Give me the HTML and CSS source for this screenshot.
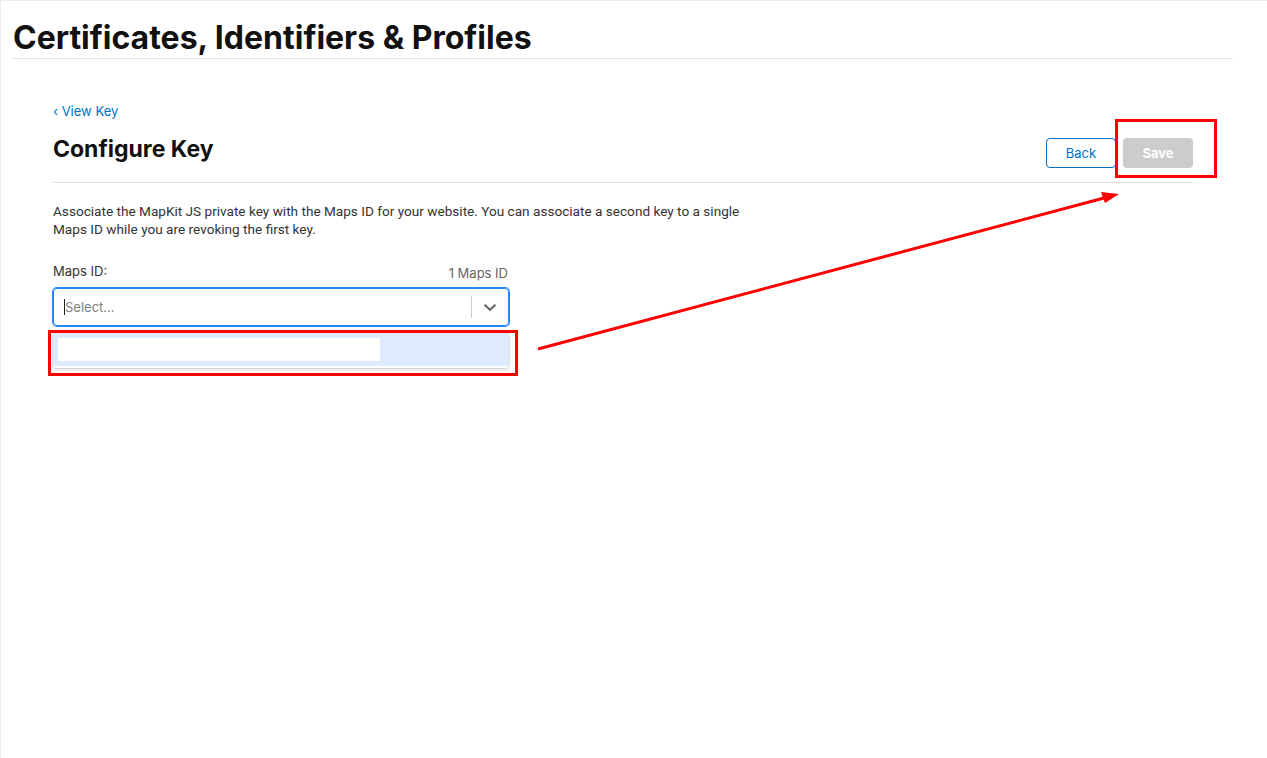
FILE: index.html
```html
<!DOCTYPE html>
<html lang="en">
<head>
  <meta charset="UTF-8">
  <title>Certificates, Identifiers &amp; Profiles - Configure Key</title>
  <link rel="stylesheet" href="styles.css">
</head>
<body>

  <!-- Page header -->
  <div class="page-header">
    <h1>Certificates, Identifiers &amp; Profiles</h1>
  </div>

  <!-- Main content -->
  <div class="content">
    <a class="crumb" href="#">&lsaquo; View Key</a>

    <div class="title-row">
      <h2>Configure Key</h2>
      <div class="actions">
        <button class="btn btn-back">Back</button>
        <button class="btn btn-save" disabled>Save</button>
      </div>
    </div>

    <p class="intro">
      Associate the MapKit JS private key with the Maps ID for your website. You can associate a second key to a single<br>
      Maps ID while you are revoking the first key.
    </p>

    <!-- Maps ID select -->
    <div class="field">
      <div class="field-label">
        <span>Maps ID:</span>
        <span class="count">1 Maps ID</span>
      </div>
      <div class="select">
        <div class="select-value"><span class="caret"></span>Select...</div>
        <div class="select-sep"></div>
        <div class="select-arrow">
          <svg width="20" height="20" viewBox="0 0 20 20"><path d="M4.5 7.7 10 12.8l5.5-5.1" fill="none" stroke="#666" stroke-width="2.2"/></svg>
        </div>
      </div>
      <div class="menu">
        <div class="menu-option"><div class="redacted"></div></div>
      </div>
    </div>
  </div>

  <!-- Annotations -->
  <svg class="annotations" width="1267" height="758" viewBox="0 0 1267 758">
    <rect x="1116.5" y="120.5" width="99" height="56" fill="none" stroke="#f00" stroke-width="3"/>
    <rect x="49.5" y="331.5" width="467" height="43" fill="none" stroke="#f00" stroke-width="3"/>
    <line x1="538" y1="349" x2="1104" y2="198" stroke="#f00" stroke-width="3"/>
    <polygon points="1119,194 1101,192 1105,203" fill="#f00"/>
  </svg>

</body>
</html>
```

FILE: styles.css
```css
/* Reset */
* {
  margin: 0;
  padding: 0;
  box-sizing: border-box;
}

body {
  background: #ffffff;
  font-family: 'Inter', 'Liberation Sans', sans-serif;
  color: #111;
  border-top: 1px solid #ececec;
  border-left: 1px solid #ececec;
  min-height: 100vh;
  position: relative;
}

/* Header */
.page-header {
  margin: 0 34px 0 12px;
  padding-top: 17px;
  height: 58px;
  border-bottom: 1px solid #e3e3e3;
}

.page-header h1 {
  font-size: 32px;
  font-weight: 700;
  line-height: 40px;
}

/* Content */
.content {
  margin: 0 74px 0 52px;
  padding-top: 44px;
}

.crumb {
  display: block;
  color: #0070c9;
  font-size: 13px;
  line-height: 16px;
  text-decoration: none;
}

.title-row {
  display: flex;
  justify-content: space-between;
  align-items: flex-end;
  padding: 15px 0 14px;
  border-bottom: 1px solid #e0e0e0;
}

.title-row h2 {
  font-size: 23px;
  font-weight: 700;
  line-height: 30px;
  padding-bottom: 4px;
}

.actions {
  display: flex;
  gap: 7px;
}

.btn {
  width: 70px;
  height: 30px;
  border-radius: 4px;
  font-family: 'Inter', 'Liberation Sans', sans-serif;
  font-size: 13px;
}

.btn-back {
  background: #fff;
  color: #0070c9;
  border: 1px solid #0070c9;
}

.btn-save {
  background: #cccccc;
  color: #fff;
  border: none;
  font-weight: 700;
}

.intro {
  font-family: 'Roboto', 'Liberation Sans', sans-serif;
  font-size: 13.6px;
  line-height: 18px;
  color: #333;
  padding-top: 19px;
}

/* Field */
.field {
  width: 456px;
  padding-top: 25px;
}

.field-label {
  display: flex;
  justify-content: space-between;
  align-items: flex-end;
  font-size: 13px;
  color: #333;
  line-height: 16px;
}

.field-label .count {
  color: #666;
  margin-bottom: -2px;
  margin-right: 1px;
}

.select {
  display: flex;
  align-items: center;
  height: 38px;
  margin-top: 9px;
  border: 1px solid #2684ff;
  box-shadow: 0 0 0 1px #2684ff;
  border-radius: 4px;
}

.select-value {
  flex: 1;
  display: flex;
  align-items: center;
  padding-left: 10px;
  font-size: 13px;
  color: #808080;
}

.caret {
  width: 1px;
  height: 16px;
  background: #222;
}

.select-sep {
  width: 1px;
  height: 22px;
  background: #ccc;
}

.select-arrow {
  width: 36px;
  display: flex;
  justify-content: center;
}

.menu {
  margin-top: 5px;
  padding: 2px 0;
  border-radius: 4px;
  box-shadow: 0 0 0 1px rgba(0, 0, 0, 0.08), 0 3px 4px rgba(0, 0, 0, 0.1);
}

.menu-option {
  height: 33px;
  background: #deebff;
  padding: 5px 0 0 5px;
}

.redacted {
  width: 322px;
  height: 23px;
  background: #fff;
}

/* Red annotation layer */
.annotations {
  position: absolute;
  top: -1px;
  left: -1px;
  pointer-events: none;
}
```
